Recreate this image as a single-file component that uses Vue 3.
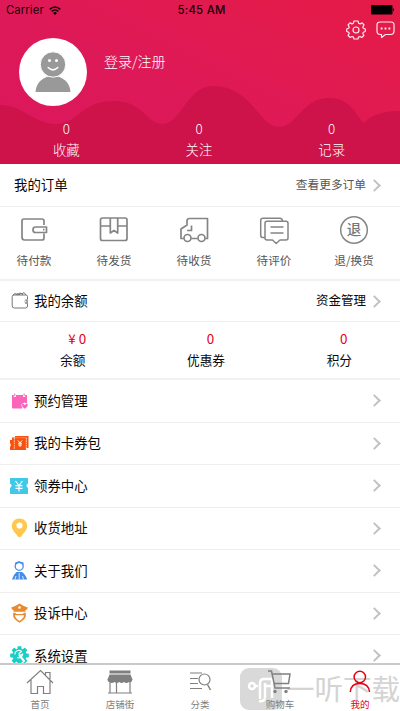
<script setup>
const counts = ['收藏', '关注', '记录']
const orders = [
  { label: '待付款', icon: 'pay' },
  { label: '待发货', icon: 'box' },
  { label: '待收货', icon: 'truck' },
  { label: '待评价', icon: 'comment' },
  { label: '退/换货', icon: 'refund' },
]
const assets = [
  { value: '¥ 0', label: '余额' },
  { value: '0', label: '优惠券' },
  { value: '0', label: '积分' },
]
const menu = [
  { label: '预约管理', icon: 'calendar' },
  { label: '我的卡券包', icon: 'cards' },
  { label: '领券中心', icon: 'coupon' },
  { label: '收货地址', icon: 'pin' },
  { label: '关于我们', icon: 'about' },
  { label: '投诉中心', icon: 'officer' },
  { label: '系统设置', icon: 'gear' },
]
const tabs = [
  { label: '首页', icon: 'home' },
  { label: '店铺街', icon: 'shop' },
  { label: '分类', icon: 'category' },
  { label: '购物车', icon: 'cart' },
  { label: '我的', icon: 'me' },
]
const gearTeeth = [0, 45, 90, 135, 180, 225, 270, 315]
</script>

<template>
  <div class="screen">
    <header class="hero">
      <svg class="waves" viewBox="0 0 400 164">
        <defs>
          <linearGradient id="bg" x1="0" y1="1" x2="1" y2="0.2">
            <stop offset="0" stop-color="#db175f" />
            <stop offset="0.5" stop-color="#de1957" />
            <stop offset="1" stop-color="#e41b49" />
          </linearGradient>
        </defs>
        <rect width="400" height="164" fill="url(#bg)" />
        <path d="M0 105C23 105 34 124 56 124C78 124 82 101 113 101C144 101 146 124 163 124C181 124 187 86 213 86C252 86 259 127 279 127C297 127 302 98 329 98C350 98 356 115 363.500 123C373 114 385 111 400 111V164H0Z" fill="#cd1349" />
      </svg>
      <div class="status">
        <span class="carrier">Carrier
          <svg width="12" height="9" viewBox="0 0 12 9" fill="none" stroke="#160008" stroke-width="1.6"><path d="M.7 3.300Q6-1.300 11.300 3.300M2.700 5.400Q6 2.600 9.300 5.400" /><path d="M4 6.900Q6 5.300 8 6.900L6 9Z" fill="#160008" stroke="none" /></svg>
        </span>
        <b class="time">5:45 AM</b>
        <svg class="battery" width="24" height="10" viewBox="0 0 24 10"><rect width="21.500" height="9.500" rx="1" /><path d="M22 3Q24 4.500 22 6.500Z" /></svg>
      </div>
      <div class="profile">
        <div class="avatar">
          <svg width="68" height="68" viewBox="0 0 68 68">
            <path d="M16.500 54C17 44 25 38 34 38S51 44 51.500 54Z" fill="#999" />
            <circle cx="34" cy="26.500" r="12.700" fill="#999" stroke="#fff" stroke-width="1" />
            <circle cx="30.500" cy="22.500" r="1.500" fill="#fff" /><circle cx="37.500" cy="22.500" r="1.500" fill="#fff" />
            <path d="M29.200 29.500Q34 34.200 38.800 29.500" fill="none" stroke="#fff" stroke-width="1.500" stroke-linecap="round" />
          </svg>
        </div>
        <span class="login">登录/注册</span>
        <div class="tools">
          <svg width="20" height="20" viewBox="0 0 20 20" fill="none" stroke="#ffeaf1" stroke-width="1.200" stroke-linejoin="round">
            <path d="M8 1H12L12.700 3.200L14.200 3.900L16.200 2.900L18 5L16.800 7L17.300 8.200L19.300 9V11.500L17.300 12.300L16.800 13.500L17.900 15.500L15.700 17.500L13.900 16.500L12.500 17.100L12 19H8L7.400 17.100L6 16.500L4.200 17.500L2.100 15.500L3.200 13.500L2.700 12.300L.7 11.500V9L2.700 8.200L3.200 7L2.100 5L4 2.900L6 3.900L7.400 3.200Z" /><circle cx="10" cy="10" r="3" />
          </svg>
          <svg width="19" height="18" viewBox="0 0 19 18" fill="none" stroke="#ffeaf1" stroke-width="1.200" stroke-linejoin="round">
            <path d="M4.200 1H14.800Q18 1 18 4V10Q18 13.500 14.500 13.500H9.500L5.500 16.500V13.500H4.200Q1 13.500 1 10V4Q1 1 4.200 1Z" /><path d="M4.700 7.500H6.500M8.600 7.500H10.400M12.500 7.500H14.300" stroke-width="1.800" />
          </svg>
        </div>
      </div>
      <div class="counts">
        <div v-for="c in counts" :key="c"><span class="num">0</span><span>{{ c }}</span></div>
      </div>
    </header>

    <section class="row order-head">
      <span>我的订单</span>
      <span class="more">查看更多订单</span>
      <i class="arrow"></i>
    </section>
    <section class="orders">
      <div v-for="o in orders" :key="o.label" class="order">
        <svg width="32" height="32" viewBox="0 0 32 32" fill="none" stroke="#858585" stroke-width="1.700" stroke-linejoin="round">
          <g v-if="o.icon === 'pay'"><path d="M26 12V8Q26 6 24 6H6Q4 6 4 8V24Q4 27 6.500 27H24Q26 27 26 25V20.500" /><path d="M17.500 14H28.500V19.500H17.500Q15 19.500 15 17V16.500Q15 14 17.500 14Z" /><path d="M25 16.600H26.500" /></g>
          <g v-else-if="o.icon === 'box'"><rect x="2.500" y="5" width="26.500" height="22.500" rx="2" /><path d="M2.500 13H12M20 13H29M12.300 5V20L16 17.500L19.700 20V5" /></g>
          <g v-else-if="o.icon === 'truck'" transform="translate(0 0)"><path d="M5.500 25.500H3V16L9 12V8Q9 5.500 11.500 5.500H29.500V25.500H27.500M13.500 25.500H19.500M9 17.500H13.500V12.500" /><circle cx="9.500" cy="25" r="3.500" /><circle cx="23.500" cy="25" r="3.500" /></g>
          <g v-else-if="o.icon === 'comment'" stroke-width="1.500"><path d="M7 24.500H4.500Q2.700 24.500 2.700 22V7.500Q2.700 5.300 5 5.300H22Q24 5.300 24.500 8" /><path d="M9 8.300H28Q30 8.300 30 10.300V25Q30 27 28 27H22L18.200 30.500L14.500 27H9Q7 27 7 25V10.300Q7 8.300 9 8.300ZM12.500 14H25.500M12.500 20H25.500" /></g>
          <g v-else><circle cx="16" cy="17" r="13.300" stroke-width="1.500" /><text x="16" y="22.300" text-anchor="middle" fill="#777" stroke="none" font-size="14.500" font-weight="500">退</text></g>
        </svg>
        <span>{{ o.label }}</span>
      </div>
    </section>

    <section class="row balance-head">
      <svg class="ico" width="20" height="20" viewBox="0 0 20 20" fill="none" stroke="#777" stroke-width="1"><path d="M17.500 9V6.500Q17.500 5 15.500 5H4Q2.200 5 2.200 6.500V16Q2.200 18 4.500 18H15.500Q17.500 18 17.500 16V14M3 5L5 3.500L7 4.500L10 3L12 4L14 2.500L16 5M6 5L7 3.500L9 5L11 3L13 5" /><path d="M18 9.200H15.500Q13.500 11.500 15.500 14H18Z" fill="#999" stroke="none" /><circle cx="15.700" cy="11.500" r=".7" fill="#fff" stroke="none" /></svg>
      <span>我的余额</span>
      <span class="more manage">资金管理</span>
      <i class="arrow"></i>
    </section>
    <section class="assets">
      <div v-for="a in assets" :key="a.label"><span class="red">{{ a.value }}</span><span>{{ a.label }}</span></div>
    </section>

    <section class="menu">
      <div v-for="m in menu" :key="m.label" class="row item">
        <svg class="ico" width="20" height="20" viewBox="0 0 20 20">
          <g v-if="m.icon === 'calendar'"><path d="M2 4H3.800V6H6V4H13V6H15.200V4H17V12.500L14.500 11.500L11 13.500L12.500 17.500H3Q2 17.500 2 16Z" fill="#fb64b9" /><path d="M4.800 2.500V5M14.100 2.500V5" stroke="#fb64b9" stroke-width="1" /><path d="M11.500 13.200L13.200 12.800L14.700 14L16.500 12.800L18 13.500Q18 15.500 14.700 17.800Q12 16 11.500 13.200Z" fill="#fb64b9" /></g>
          <g v-else-if="m.icon === 'cards'"><path d="M0 7H2V4.500H5V3H18.500V15H16V17H0V14Q1.800 12 0 10Z" fill="#f8500d" /><path d="M4.300 5V16.500M16.300 5V16.500" stroke="#fff" stroke-width=".8" stroke-dasharray="1.500 .8" /><path d="M5 4.700H16.500" stroke="#ffb188" stroke-width=".6" /><path d="M8 7.500L10 10L12 7.500M10 10V14M8 10.300H12M8 12H12" fill="none" stroke="#fff" stroke-width=".9" /></g>
          <g v-else-if="m.icon === 'coupon'"><path d="M0 2H18V7.500Q14.800 9.500 18 12V18H0V12Q3.200 9.500 0 7.500Z" fill="#3fc8e8" /><path d="M5.500 5L9 9.500L12.500 5M9 9.500V15.500M5.500 9.700H12.500M5.500 12.300H12.500" fill="none" stroke="#fff" stroke-width="1.200" /></g>
          <g v-else-if="m.icon === 'pin'"><path d="M9.500 .5C5 .5 1.800 3.800 1.800 8C1.800 12 5 14.500 7.600 18.200Q9.500 20.300 11.400 18.200C14 14.500 17.200 12 17.200 8C17.200 3.800 14 .5 9.500 .5Z" fill="#ffc74b" /><circle cx="9.500" cy="7.500" r="3.100" fill="#fff" /></g>
          <g v-else-if="m.icon === 'about'"><circle cx="9.200" cy="5.300" r="4" fill="#fff" stroke="#438ce9" stroke-width="1.300" /><path d="M5 4Q9 0 13.500 4V1.500L9 .2L5.200 1.500Z" fill="#438ce9" /><path d="M6.500 11H12Q16 14 17 18.500H2Q3 14 6.500 11Z" fill="#438ce9" /><path d="M9.200 12V18.500M6 15L5 18.500M12.500 15L13.500 18.500" stroke="#fff" stroke-width=".8" /></g>
          <g v-else-if="m.icon === 'officer'"><path d="M1.200 4.500Q5 3.500 9.500 .5Q14 3.500 17.800 4.500Q17.500 6.500 15.500 7.200V8.800H3.500V7.200Q1.500 6.500 1.200 4.500Z" fill="#e88b30" /><circle cx="9.500" cy="4.500" r="1.300" fill="#fff" /><path d="M3.200 9.800V13.500Q4.500 17 9.500 19.700Q14.500 17 15.800 13.500V9.800L14 9.800L12.500 11H6.500L5 9.800Z" fill="#e88b30" /><path d="M5.200 12L7 12.200H12L13.800 12V13.800Q12.500 16.200 9.500 17.900Q6.500 16.200 5.200 13.800Z" fill="#fff" /></g>
          <g v-else><g fill="#18cec5"><rect v-for="t in gearTeeth" :key="t" x="7.500" y=".2" width="4" height="5" rx=".8" :transform="`rotate(${t} 9.500 9.500)`" /><circle cx="9.500" cy="9.500" r="7" /></g><path d="M9.500 9.500L14 15" stroke="#fff" stroke-width="2" stroke-linecap="round" /><path d="M4.800 8.500A4 4 0 0 1 11.500 5.500L9 7.500L10 9.500L12.700 8A4 4 0 0 1 7 11.500" fill="none" stroke="#fff" stroke-width="1.200" stroke-linejoin="round" /></g>
        </svg>
        <span>{{ m.label }}</span>
        <i class="arrow"></i>
      </div>
    </section>

    <nav class="tabbar">
      <div class="watermark">
        <svg width="42" height="42" viewBox="0 0 42 42"><rect width="42" height="42" rx="9" fill="#c9c9c9" /><g fill="none" stroke="#fff" stroke-width="2.500"><circle cx="12" cy="18" r="3" /><path d="M14.500 18H18M20 31V15Q20 11 24 11H32M25 15V29Q25 34 19 33M32 11V30M25 18H32" /></g></svg>
        <span>一听下载</span>
      </div>
      <div v-for="t in tabs" :key="t.label" class="tab" :class="{ active: t.icon === 'me' }">
        <svg width="28" height="28" viewBox="0 0 28 28" fill="none" stroke="currentColor" stroke-width="1.200">
          <g v-if="t.icon === 'home'"><path d="M1 15L14.500 2.500L27 15M5 12V25.500H11.500V18.500H17.500V25.500H24V12M19.500 7V4.500H24V11" /></g>
          <g v-else-if="t.icon === 'shop'" transform="translate(-.5 0)"><path d="M4 2.500H25V5.500H4ZM4 6.500H25L27 11.500H2Z" fill="currentColor" stroke="none" /><path d="M2 11H27Q26.500 15 23.500 14Q21 16 18.500 14Q16 16 14 14Q11 16 9 14Q6 16 4 14Q2 14 2 11Z" fill="currentColor" stroke="none" /><path d="M4.500 14V25M11 15V25M24.500 14V25M2.500 25H26.500" /></g>
          <g v-else-if="t.icon === 'category'"><path d="M4 5H16M4 10.500H12M4 15.500H12M4 20.500H16" /><circle cx="18.500" cy="11.500" r="5.500" /><path d="M21.500 16.500L24.500 22" stroke-width="1.500" /></g>
          <g v-else-if="t.icon === 'cart'"><path d="M2 3H5.500L9 20H24M6 6H24L22.500 15.500H8.500" stroke-width="1.500" /><circle cx="9" cy="23.500" r="1.700" fill="currentColor" stroke="none" /><circle cx="20" cy="23.500" r="1.700" fill="currentColor" stroke="none" /></g>
          <g v-else stroke-width="1.500"><circle cx="13.800" cy="9" r="5.700" /><path d="M4.300 24Q4.800 15.500 13.800 15.500T23.500 24" /></g>
        </svg>
        <span>{{ t.label }}</span>
      </div>
    </nav>
  </div>
</template>

<style>
body { margin: 0; overflow: hidden; }
</style>

<style scoped>
* { box-sizing: border-box; }
.screen { position: relative; width: 400px; height: 711px; overflow: hidden; display: flex; flex-direction: column; background: #fff; color: #080808; font: 400 13.4px/20px "Noto Sans CJK SC", sans-serif; }
svg { display: block; flex: none; }
.hero { position: relative; height: 164px; flex: none; color: #fff; font-weight: 300; }
.waves { position: absolute; inset: 0; width: 400px; height: 164px; }
.status { position: relative; height: 20px; padding: 0 5px 0 6px; display: grid; grid-template-columns: 1fr auto 1fr; align-items: center; color: #160008; font: 400 11.3px/20px Inter, sans-serif; }
.carrier { display: flex; align-items: center; gap: 5px; letter-spacing: .1px; }
.time { font-weight: 500; letter-spacing: .3px; padding-left: 2px; }
.battery { justify-self: end; fill: #000; }
.profile { position: relative; display: flex; align-items: flex-start; height: 100px; padding-left: 19px; }
.avatar { margin-top: 18px; width: 68px; height: 68px; border-radius: 50%; background: #fff; }
.login { margin: 31px 0 0 17px; font-size: 14px; }
.tools { display: flex; gap: 10px; margin: 0 5px 0 auto; }
.tools svg:last-child { margin-top: 1px; }
.counts { position: relative; display: flex; padding-right: 2px; margin-top: -2px; }
.counts div { flex: 1; display: flex; flex-direction: column; align-items: center; line-height: 21px; }
.row { display: flex; align-items: center; flex: none; padding-right: 17px; }
.row span { position: relative; top: -1px; }
.arrow { width: 9px; height: 9px; border: solid #c2c2c6; border-width: 1.8px 1.8px 0 0; transform: rotate(45deg); margin: 0 4px 0 auto; flex: none; border-top-width: 2px; border-right-width: 2px; }
.more { margin-left: auto; font-size: 11.7px; color: #555; }
.more + .arrow { margin-left: 4px; }
.order-head { height: 43px; padding-left: 14px; border-bottom: 1px solid #eee; }
.orders { height: 74px; flex: none; display: grid; grid-template-columns: repeat(5, 1fr); border-bottom: 2px solid #f1f1f1; }
.order { display: flex; flex-direction: column; align-items: center; padding-top: 6px; font-size: 11.6px; color: #555; }
.order svg { margin: 0 0 5px -12px; }
.order span { margin-left: -12px; }
.balance-head { height: 41px; padding-left: 10px; border-bottom: 1px solid #eee; }
.ico { margin-right: 4px; }
.balance-head .ico { margin-top: -2px; }
.manage { font-size: 12.5px; color: #080808; }
.assets { height: 58px; flex: none; display: flex; padding-left: 6px; margin-right: -6px; border-bottom: 2px solid #f1f1f1; font-size: 12.7px; }
.assets div { flex: 1; display: flex; flex-direction: column; align-items: center; padding-top: 6px; line-height: 21px; }
.red { color: #e60012; font-size: 13.4px; padding-left: 9px; }
.item { height: 42.5px; padding-left: 10px; border-bottom: 1px solid #eee; }
.tabbar { position: absolute; left: 0; right: 0; bottom: 0; height: 48px; display: grid; grid-template-columns: repeat(5, 1fr); background: #fff; border-top: 2px solid #c9c9c9; }
.tab { position: relative; display: flex; flex-direction: column; align-items: center; padding-top: 3px; color: #808080; font-size: 9.5px; line-height: 16px; }
.active { color: #e60012; }
.watermark { position: absolute; left: 240px; top: 3px; display: flex; align-items: center; opacity: .7; pointer-events: none; }
.watermark span { margin: -2px 0 0 4px; white-space: nowrap; font-size: 28.5px; line-height: 42px; color: #c2c2c2; font-weight: 400; }
</style>
